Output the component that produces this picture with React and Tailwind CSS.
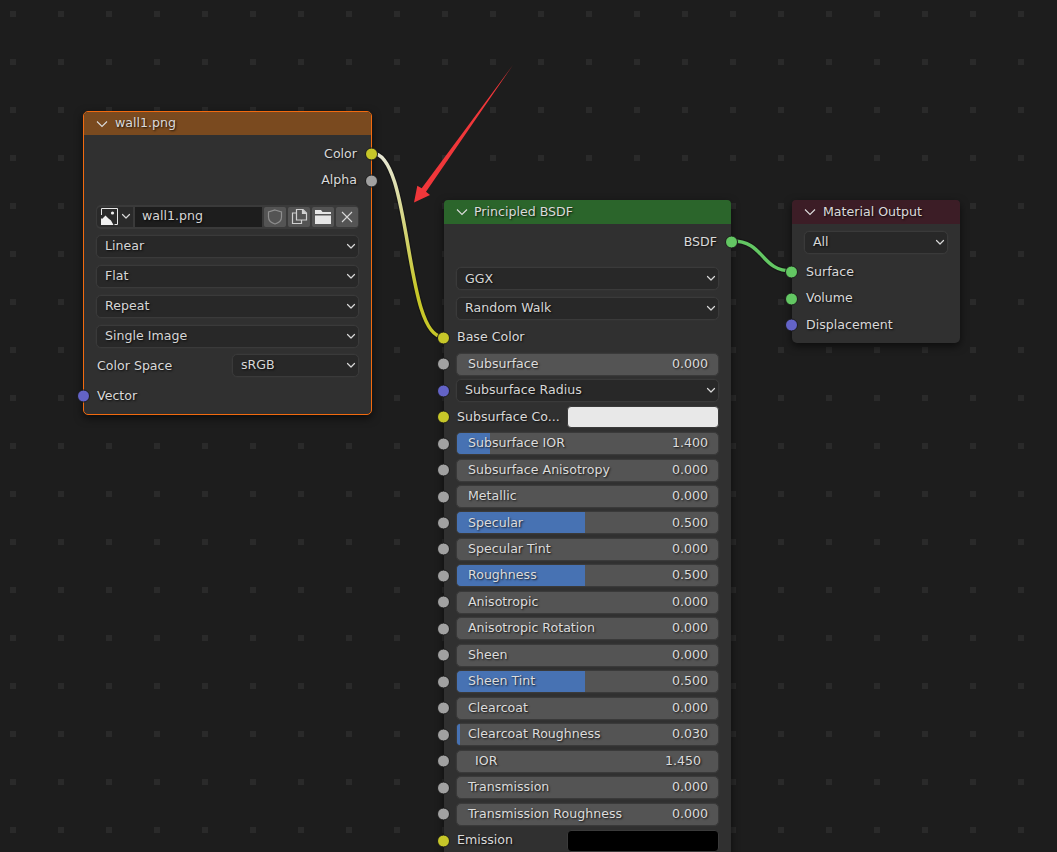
import React from "react";

const SOCKET = {
  yellow: "bg-[#c7c729]",
  grey: "bg-[#a1a1a1]",
  blue: "bg-[#6363c7]",
  green: "bg-[#63c763]",
};
const SHADOW = "[text-shadow:1px_1px_2px_rgba(0,0,0,0.8)]";

function Socket({ color, side = "left" }) {
  return (
    <span
      className={`absolute top-1/2 -translate-y-1/2 w-[13px] h-[13px] rounded-full border border-[#1b1b1b] ${SOCKET[color]} ${
        side === "left" ? "left-[-7px]" : "right-[-7px]"
      }`}
    />
  );
}

function Chevron({ className = "" }) {
  return (
    <svg width="10" height="7" viewBox="0 0 10 7" className={className} fill="none" stroke="#d8d8d8" strokeWidth="1.2" strokeLinecap="round" strokeLinejoin="round">
      <path d="M1.500 1.500 5 5l3.500-3.500" />
    </svg>
  );
}

function Header({ title, bg, h = "h-[24px]", gap = "mr-[6px]" }) {
  return (
    <div className={`${h} flex items-center rounded-t-[4px] ${bg}`}>
      <svg width="12" height="8" viewBox="0 0 12 8" className={`ml-[12px] shrink-0 ${gap}`} fill="none" stroke="#dcdcdc" strokeWidth="1.1">
        <path d="M1 1.500 6 6.500l5-5" />
      </svg>
      <span className={`text-[12.6px] text-[#dadada] ${SHADOW}`}>{title}</span>
    </div>
  );
}

function Dropdown({ label, className = "w-full" }) {
  return (
    <div className={`h-[23px] flex items-center justify-between rounded-[5px] bg-[#282828] border border-[#3a3a3a] shadow-[0_0_0_0.5px_#353535] pl-[8px] pr-[2px] ${className}`}>
      <span className={`text-[12.6px] text-[#d6d6d6] ${SHADOW}`}>{label}</span>
      <Chevron />
    </div>
  );
}

function Row({ socket, side = "left", h = "h-[26.48px]", children, extra = "" }) {
  return (
    <div className={`relative flex items-center px-[12px] ${h} ${extra}`}>
      {socket && <Socket color={socket} side={side} />}
      {children}
    </div>
  );
}

function Label({ children, className = "" }) {
  return <span className={`text-[12.6px] leading-none text-[#d9d9d9] ${SHADOW} ${className}`}>{children}</span>;
}

function Slider({ label, value, fill = "", indent = false }) {
  return (
    <div className="relative w-full h-[23px] rounded-[5px] bg-[#545454] border border-[#3a3a3a] shadow-[0_0_0_0.5px_#353535] flex items-center justify-between">
      {fill && <div className={`absolute left-0 top-0 bottom-0 rounded-l-[4px] bg-[#4772b3] ${fill}`} />}
      <span className={`relative text-[12.6px] text-[#dcdcdc] ${SHADOW} ${indent ? "ml-[18px]" : "ml-[11px]"}`}>{label}</span>
      <span className={`relative text-[12.6px] text-[#dcdcdc] ${SHADOW} ${indent ? "mr-[17px]" : "mr-[10px]"}`}>{value}</span>
    </div>
  );
}

function ColorRow({ label, color, socket }) {
  return (
    <Row socket={socket}>
      <Label className="ml-[1px] w-[110px] shrink-0 whitespace-nowrap">{label}</Label>
      <div className={`ml-auto w-[152px] h-[22px] rounded-[4px] border border-[#3a3a3a] ${color}`} />
    </Row>
  );
}

function IconButton({ children }) {
  return <div className="w-[22px] h-[20px] rounded-[2px] bg-[#545454] flex items-center justify-center">{children}</div>;
}

function ImageRow() {
  return (
    <div className="h-[24px] flex items-center gap-[2px] rounded-[5px] bg-[#3a3a3a] px-[1px]">
      <div className="w-[36px] h-[20px] rounded-l-[4px] bg-[#2a2a2a] flex items-center justify-between pl-[4px] pr-[2px]">
        <svg width="17" height="17" viewBox="0 0 17 17" fill="none">
          <path d="M.5 7V.5h16v16h-3" stroke="#e6e6e6" />
          <path d="M.5 16.500v-6" stroke="#e6e6e6" />
          <path d="M0 17V12l4.500-4.500 3 3 2.500 2 2.500 4.500z" fill="#f0f0f0" />
          <circle cx="11.500" cy="5" r="1.600" fill="#f0f0f0" />
        </svg>
        <Chevron />
      </div>
      <div className="flex-1 h-[20px] bg-[#1d1d1d] flex items-center pl-[7px]">
        <span className={`text-[12.6px] text-[#d6d6d6] ${SHADOW}`}>wall1.png</span>
      </div>
      <IconButton>
        <svg width="16" height="16" viewBox="0 0 16 16" fill="none" stroke="#8f8f8f" strokeWidth="1.2">
          <path d="M8 1 14.500 3v5c0 3.500-3 6-6.500 7C4.500 14 1.500 11.500 1.500 8V3z" />
        </svg>
      </IconButton>
      <IconButton>
        <svg width="17" height="17" viewBox="0 0 17 17" fill="none" stroke="#d0d0d0" strokeWidth="1.2">
          <path d="M5.500 5H1.500v10.500h9V12" />
          <path d="M5.500 1.500h6.500l3.500 3.500v7h-10z" />
          <path d="M11.500 1.500V5.500h4" fill="#d0d0d0" />
        </svg>
      </IconButton>
      <IconButton>
        <svg width="18" height="16" viewBox="0 0 18 16">
          <path d="M1 1h6l1.500 2H17v2H1z" fill="#e6e6e6" />
          <path d="M1 6.500h16V15H1z" fill="#e6e6e6" />
        </svg>
      </IconButton>
      <IconButton>
        <svg width="12" height="12" viewBox="0 0 12 12" fill="none" stroke="#d8d8d8" strokeWidth="1.1">
          <path d="M1 1l10 10M11 1 1 11" />
        </svg>
      </IconButton>
    </div>
  );
}

const SLIDERS = [
  { s: "color", label: "Subsurface Co...", color: "bg-[#e8e8e8]", socket: "yellow" },
  { label: "Subsurface IOR", value: "1.400", fill: "w-[33px]" },
  { label: "Subsurface Anisotropy", value: "0.000" },
  { label: "Metallic", value: "0.000" },
  { label: "Specular", value: "0.500", fill: "w-[128px]" },
  { label: "Specular Tint", value: "0.000" },
  { label: "Roughness", value: "0.500", fill: "w-[128px]" },
  { label: "Anisotropic", value: "0.000" },
  { label: "Anisotropic Rotation", value: "0.000" },
  { label: "Sheen", value: "0.000" },
  { label: "Sheen Tint", value: "0.500", fill: "w-[128px]" },
  { label: "Clearcoat", value: "0.000" },
  { label: "Clearcoat Roughness", value: "0.030", fill: "w-[3px]" },
  { label: "IOR", value: "1.450", indent: true },
  { label: "Transmission", value: "0.000" },
  { label: "Transmission Roughness", value: "0.000" },
  { s: "color", label: "Emission", color: "bg-black", socket: "yellow" },
];

export default function App() {
  return (
    <div className="relative w-[1057px] h-[852px] overflow-hidden bg-[#1d1d1d] bg-[conic-gradient(at_6px_6px,transparent_75%,#2a2a2a_75%)] bg-[length:48px_48px] bg-[position:10px_11px] font-['DejaVu_Sans',sans-serif]">
      {/* wires */}
      <svg className="absolute inset-0" width="1057" height="852" fill="none">
        <defs>
          <linearGradient id="w1" x1="0" y1="153" x2="0" y2="337" gradientUnits="userSpaceOnUse">
            <stop offset="0" stopColor="#e8e8d8" />
            <stop offset="0.4" stopColor="#d4d47c" />
            <stop offset="0.75" stopColor="#c7c729" />
          </linearGradient>
        </defs>
        <path d="M372 153C412 153 404 337 443 337" stroke="#141414" strokeWidth="6" opacity="0.7" />
        <path d="M372 153C412 153 404 337 443 337" stroke="url(#w1)" strokeWidth="3.5" />
        <path d="M732 241C765 241 760 271 792 271" stroke="#141414" strokeWidth="6" opacity="0.7" />
        <path d="M732 241C765 241 760 271 792 271" stroke="#63c763" strokeWidth="3.5" />
      </svg>

      {/* Image Texture node */}
      <div className="absolute left-[83px] top-[111px] w-[289px] h-[304px] rounded-[5px] border border-[#f26a0f] bg-[#303030] shadow-[0_3px_8px_rgba(0,0,0,0.6)]">
        <Header title="wall1.png" bg="bg-[#7a4a1f]" h="h-[23px]" gap="mr-[7px]" />
        <div className="pt-[6px]">
          <Row socket="yellow" side="right" extra="justify-end pr-[14px]"><Label>Color</Label></Row>
          <Row socket="grey" side="right" extra="justify-end pr-[14px]"><Label>Alpha</Label></Row>
          <div className="px-[12px] mt-[11px]">
            <ImageRow />
          </div>
          <div className="px-[12px] mt-[6px] flex flex-col gap-[7px]">
            <Dropdown label="Linear" />
            <Dropdown label="Flat" />
            <Dropdown label="Repeat" />
            <Dropdown label="Single Image" />
          </div>
          <Row h="h-[30px]" extra="mt-[3px]">
            <Label className="ml-[1px]">Color Space</Label>
            <Dropdown label="sRGB" className="ml-auto w-[127px]" />
          </Row>
          <Row socket="blue" h="h-[30px]"><Label className="ml-[1px]">Vector</Label></Row>
        </div>
      </div>

      {/* Principled BSDF node */}
      <div className="absolute left-[444px] top-[200px] w-[287px] h-[700px] rounded-[5px] bg-[#303030] shadow-[0_3px_8px_rgba(0,0,0,0.6)]">
        <Header title="Principled BSDF" bg="bg-[#2b652b]" />
        <div className="pt-[5px]">
          <Row socket="green" side="right" extra="justify-end pr-[14px]"><Label>BSDF</Label></Row>
          <div className="px-[12px] mt-[12px] flex flex-col gap-[6.500px]">
            <Dropdown label="GGX" />
            <Dropdown label="Random Walk" />
          </div>
          <Row socket="yellow" extra="mt-[4.500px]"><Label className="ml-[1px]">Base Color</Label></Row>
          <Row socket="grey"><Slider label="Subsurface" value="0.000" /></Row>
          <Row socket="blue"><Dropdown label="Subsurface Radius" /></Row>
          {SLIDERS.map((r) =>
            r.s === "color" ? (
              <ColorRow key={r.label} label={r.label} color={r.color} socket={r.socket} />
            ) : (
              <Row key={r.label} socket="grey">
                <Slider label={r.label} value={r.value} fill={r.fill} indent={r.indent} />
              </Row>
            )
          )}
        </div>
      </div>

      {/* Material Output node */}
      <div className="absolute left-[792px] top-[200px] w-[168px] h-[143px] rounded-[5px] bg-[#303030] shadow-[0_3px_8px_rgba(0,0,0,0.6)]">
        <Header title="Material Output" bg="bg-[#3c1d26]" gap="mr-[7px]" />
        <div className="pt-[7px]">
          <div className="px-[12px]"><Dropdown label="All" /></div>
          <Row socket="green" extra="mt-[5px]"><Label className="ml-[2px]">Surface</Label></Row>
          <Row socket="green"><Label className="ml-[2px]">Volume</Label></Row>
          <Row socket="blue"><Label className="ml-[2px]">Displacement</Label></Row>
        </div>
      </div>

      {/* annotation arrow */}
      <svg className="absolute inset-0 pointer-events-none" width="1057" height="852">
        <polygon points="414,202.500 417.300,185.700 421.700,188.300 513,65 426,191.700 430,195" fill="#f0373a" />
      </svg>
    </div>
  );
}
